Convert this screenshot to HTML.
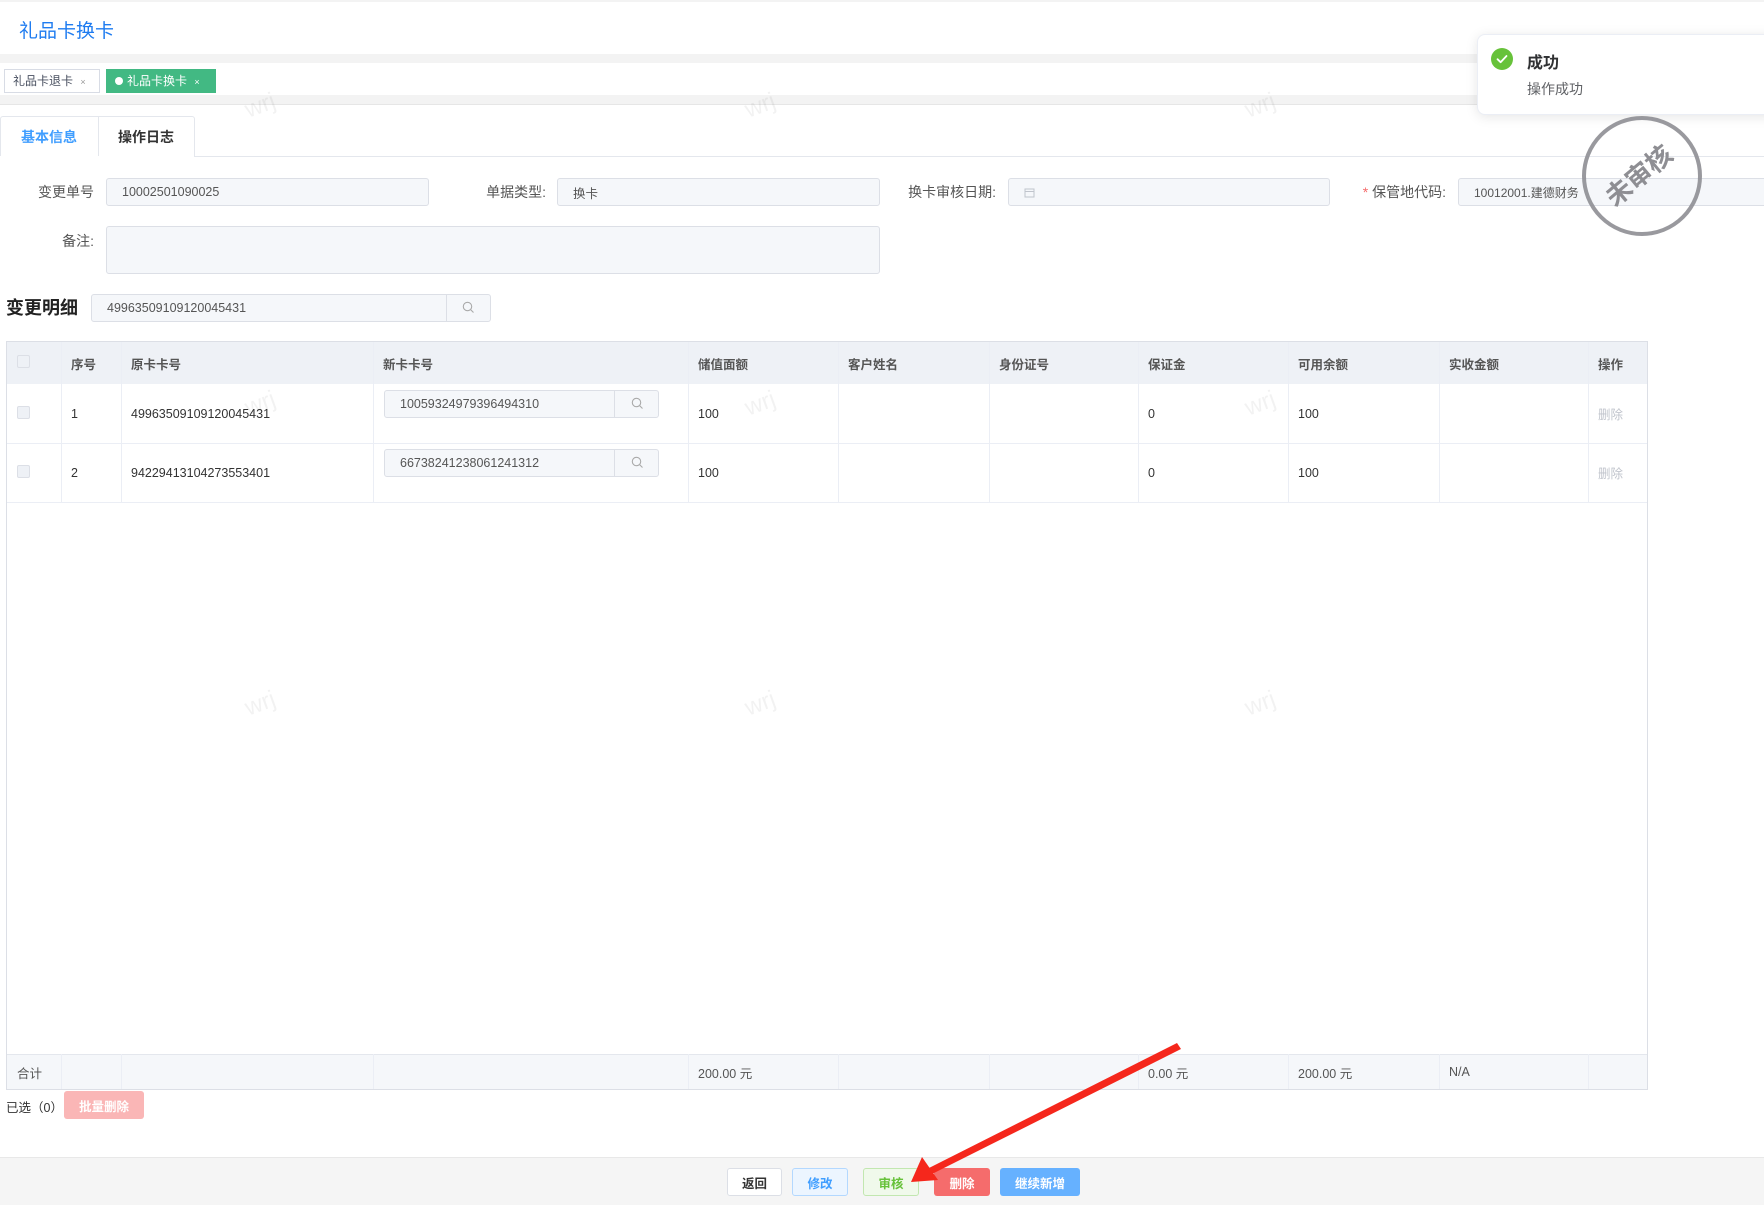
<!DOCTYPE html>
<html><head><meta charset="utf-8"><style>
*{box-sizing:border-box;margin:0;padding:0}
body{width:1764px;height:1205px;position:relative;overflow:hidden;background:#fff;font-family:"Liberation Sans","Noto Sans CJK SC",sans-serif;color:#333;font-size:13px}
.a{position:absolute}
.inp{position:absolute;background:#f5f7fa;border:1px solid #dcdfe6;border-radius:3px;font-size:12.5px;color:#555;padding-left:15px;display:flex;align-items:center}
.lbl{position:absolute;font-size:14px;color:#555;text-align:right}
.th,.td{position:absolute;font-size:12.5px;display:flex;align-items:center;padding-left:10px}
.th{font-weight:bold;color:#555}
.vl{position:absolute;width:1px;background:#ebeef5}
.hl{position:absolute;height:1px;background:#ebeef5}
.btn{position:absolute;top:1168px;height:28px;border-radius:3px;font-size:12.5px;font-weight:bold;display:flex;align-items:center;justify-content:center}
.wm{position:absolute;color:rgba(0,0,0,0.05);font-size:24px;transform:rotate(-20deg)}
.srch{position:absolute}
</style></head><body>
<div class="a" style="left:0;top:0;width:1764px;height:2px;background:#f3f3f3"></div>
<div class="a" style="left:19px;top:16px;font-size:19px;color:#1f7cf0">礼品卡换卡</div>
<div class="a" style="left:0;top:54px;width:1764px;height:9px;background:#f3f3f3"></div>
<div class="a" style="left:0;top:95px;width:1764px;height:10px;background:#f3f3f3;border-bottom:1px solid #e6e6e6"></div>
<div class="a" style="left:4px;top:69px;width:96px;height:24px;border:1px solid #d8dce5;font-size:12px;color:#495060;padding-left:8px;line-height:22px">礼品卡退卡 <span style="font-size:9px;color:#999;margin-left:4px">×</span></div>
<div class="a" style="left:106px;top:69px;width:110px;height:24px;background:#42b983;font-size:12px;color:#fff;padding-left:9px;line-height:24px"><span style="display:inline-block;width:8px;height:8px;border-radius:50%;background:#fff;margin-right:4px"></span>礼品卡换卡 <span style="font-size:9px;margin-left:4px">×</span></div>

<div class="a" style="left:0;top:156px;width:1764px;height:1px;background:#e4e7ed"></div>
<div class="a" style="left:0;top:116px;width:195px;height:41px;border:1px solid #e4e7ed;border-bottom:none;border-radius:3px 3px 0 0;background:#fff"></div>
<div class="a" style="left:98px;top:116px;width:1px;height:40px;background:#e4e7ed"></div>
<div class="a" style="left:0;top:156px;width:98px;height:1px;background:#fff"></div>
<div class="a" style="left:21px;top:127px;font-size:14px;color:#409eff;font-weight:bold">基本信息</div>
<div class="a" style="left:118px;top:127px;font-size:14px;color:#333;font-weight:bold">操作日志</div>

<div class="lbl" style="left:20px;top:182px;width:74px">变更单号</div>
<div class="inp" style="left:106px;top:178px;width:323px;height:28px">10002501090025</div>
<div class="lbl" style="left:470px;top:182px;width:76px">单据类型:</div>
<div class="inp" style="left:557px;top:178px;width:323px;height:28px">换卡</div>
<div class="lbl" style="left:890px;top:182px;width:106px">换卡审核日期:</div>
<div class="inp" style="left:1008px;top:178px;width:322px;height:28px"><svg width="11" height="11" viewBox="0 0 11 11"><rect x="1" y="2" width="9" height="8" fill="none" stroke="#c0c4cc"/><line x1="1" y1="4.5" x2="10" y2="4.5" stroke="#c0c4cc"/></svg></div>
<div class="lbl" style="left:1350px;top:182px;width:96px"><span style="color:#f56c6c">*</span> 保管地代码:</div>
<div class="inp" style="left:1458px;top:178px;width:320px;height:28px;font-size:12px">10012001.建德财务</div>
<div class="lbl" style="left:40px;top:231px;width:54px">备注:</div>
<div class="inp" style="left:106px;top:226px;width:774px;height:48px"></div>

<div class="a" style="left:6px;top:294px;font-size:18px;font-weight:bold;color:#222">变更明细</div>
<div class="inp" style="left:91px;top:294px;width:400px;height:28px;padding-left:15px">49963509109120045431</div>
<div class="a" style="left:446px;top:295px;width:1px;height:26px;background:#dcdfe6"></div>
<svg class="srch" style="left:462px;top:301px" width="13" height="13" viewBox="0 0 13 13"><circle cx="5.5" cy="5.5" r="4.2" fill="none" stroke="#aaa" stroke-width="1.1"/><line x1="8.6" y1="8.6" x2="11.5" y2="11.5" stroke="#aaa" stroke-width="1.1"/></svg>

<div class="a" style="left:6px;top:341px;width:1642px;height:749px;border:1px solid #dcdfe6"></div>
<div class="a" style="left:7px;top:342px;width:1640px;height:42px;background:#eef1f6"></div>
<div class="a" style="left:7px;top:1054px;width:1640px;height:35px;background:#f5f7fa;border-top:1px solid #e4e7ed"></div>
<div class="hl" style="left:7px;top:443px;width:1640px"></div>
<div class="hl" style="left:7px;top:502px;width:1640px"></div>
<div class="vl" style="left:61px;top:342px;height:160px"></div>
<div class="vl" style="left:121px;top:342px;height:160px"></div>
<div class="vl" style="left:373px;top:342px;height:160px"></div>
<div class="vl" style="left:688px;top:342px;height:160px"></div>
<div class="vl" style="left:838px;top:342px;height:160px"></div>
<div class="vl" style="left:989px;top:342px;height:160px"></div>
<div class="vl" style="left:1138px;top:342px;height:160px"></div>
<div class="vl" style="left:1288px;top:342px;height:160px"></div>
<div class="vl" style="left:1439px;top:342px;height:160px"></div>
<div class="vl" style="left:1588px;top:342px;height:160px"></div>
<div class="vl" style="left:61px;top:1054px;height:35px"></div>
<div class="vl" style="left:121px;top:1054px;height:35px"></div>
<div class="vl" style="left:373px;top:1054px;height:35px"></div>
<div class="vl" style="left:688px;top:1054px;height:35px"></div>
<div class="vl" style="left:838px;top:1054px;height:35px"></div>
<div class="vl" style="left:989px;top:1054px;height:35px"></div>
<div class="vl" style="left:1138px;top:1054px;height:35px"></div>
<div class="vl" style="left:1288px;top:1054px;height:35px"></div>
<div class="vl" style="left:1439px;top:1054px;height:35px"></div>
<div class="vl" style="left:1588px;top:1054px;height:35px"></div>

<div class="a" style="left:17px;top:355px;width:13px;height:13px;border:1px solid #dcdfe6;background:#eef1f6;border-radius:2px"></div>
<div class="th" style="left:61px;top:342px;height:42px">序号</div>
<div class="th" style="left:121px;top:342px;height:42px">原卡卡号</div>
<div class="th" style="left:373px;top:342px;height:42px">新卡卡号</div>
<div class="th" style="left:688px;top:342px;height:42px">储值面额</div>
<div class="th" style="left:838px;top:342px;height:42px">客户姓名</div>
<div class="th" style="left:989px;top:342px;height:42px">身份证号</div>
<div class="th" style="left:1138px;top:342px;height:42px">保证金</div>
<div class="th" style="left:1288px;top:342px;height:42px">可用余额</div>
<div class="th" style="left:1439px;top:342px;height:42px">实收金额</div>
<div class="th" style="left:1588px;top:342px;height:42px">操作</div>

<div class="a" style="left:17px;top:406px;width:13px;height:13px;border:1px solid #dcdfe6;background:#eef1f6;border-radius:2px"></div>
<div class="td" style="left:61px;top:384px;height:59px">1</div>
<div class="td" style="left:121px;top:384px;height:59px">49963509109120045431</div>
<div class="inp" style="left:384px;top:390px;width:275px;height:28px">10059324979396494310</div>
<div class="a" style="left:614px;top:391px;width:1px;height:26px;background:#dcdfe6"></div>
<svg class="srch" style="left:631px;top:397px" width="13" height="13" viewBox="0 0 13 13"><circle cx="5.5" cy="5.5" r="4.2" fill="none" stroke="#aaa" stroke-width="1.1"/><line x1="8.6" y1="8.6" x2="11.5" y2="11.5" stroke="#aaa" stroke-width="1.1"/></svg>
<div class="td" style="left:688px;top:384px;height:59px">100</div>
<div class="td" style="left:1138px;top:384px;height:59px">0</div>
<div class="td" style="left:1288px;top:384px;height:59px">100</div>
<div class="td" style="left:1588px;top:384px;height:59px;color:#c0c4cc">删除</div>

<div class="a" style="left:17px;top:465px;width:13px;height:13px;border:1px solid #dcdfe6;background:#eef1f6;border-radius:2px"></div>
<div class="td" style="left:61px;top:443px;height:59px">2</div>
<div class="td" style="left:121px;top:443px;height:59px">94229413104273553401</div>
<div class="inp" style="left:384px;top:449px;width:275px;height:28px">66738241238061241312</div>
<div class="a" style="left:614px;top:450px;width:1px;height:26px;background:#dcdfe6"></div>
<svg class="srch" style="left:631px;top:456px" width="13" height="13" viewBox="0 0 13 13"><circle cx="5.5" cy="5.5" r="4.2" fill="none" stroke="#aaa" stroke-width="1.1"/><line x1="8.6" y1="8.6" x2="11.5" y2="11.5" stroke="#aaa" stroke-width="1.1"/></svg>
<div class="td" style="left:688px;top:443px;height:59px">100</div>
<div class="td" style="left:1138px;top:443px;height:59px">0</div>
<div class="td" style="left:1288px;top:443px;height:59px">100</div>
<div class="td" style="left:1588px;top:443px;height:59px;color:#c0c4cc">删除</div>

<div class="td" style="left:7px;top:1055px;height:34px;color:#555">合计</div>
<div class="td" style="left:688px;top:1055px;height:34px;color:#555">200.00 元</div>
<div class="td" style="left:1138px;top:1055px;height:34px;color:#555">0.00 元</div>
<div class="td" style="left:1288px;top:1055px;height:34px;color:#555">200.00 元</div>
<div class="td" style="left:1439px;top:1055px;height:34px;color:#555">N/A</div>

<div class="a" style="left:6px;top:1097px;font-size:12.5px">已选（0）</div>
<div class="a" style="left:64px;top:1091px;width:80px;height:28px;background:#fab6b6;border-radius:3px;color:#fff;font-size:12.5px;font-weight:bold;display:flex;align-items:center;justify-content:center">批量删除</div>

<div class="a" style="left:0;top:1157px;width:1764px;height:48px;background:#f5f5f5;border-top:1px solid #e8e8e8"></div>
<div class="btn" style="left:727px;width:55px;background:#fff;border:1px solid #dcdfe6;color:#333">返回</div>
<div class="btn" style="left:792px;width:56px;background:#ecf5ff;border:1px solid #b3d8ff;color:#409eff">修改</div>
<div class="btn" style="left:863px;width:56px;background:#f0f9eb;border:1px solid #c2e7b0;color:#67c23a">审核</div>
<div class="btn" style="left:934px;width:56px;background:#f56c6c;color:#fff">删除</div>
<div class="btn" style="left:1000px;width:80px;background:#66b1ff;color:#fff">继续新增</div>

<div class="wm" style="left:245px;top:92px">wrj</div>
<div class="wm" style="left:745px;top:92px">wrj</div>
<div class="wm" style="left:1245px;top:92px">wrj</div>
<div class="wm" style="left:245px;top:390px">wrj</div>
<div class="wm" style="left:745px;top:390px">wrj</div>
<div class="wm" style="left:1245px;top:390px">wrj</div>
<div class="wm" style="left:245px;top:690px">wrj</div>
<div class="wm" style="left:745px;top:690px">wrj</div>
<div class="wm" style="left:1245px;top:690px">wrj</div>

<div class="a" style="left:1477px;top:34px;width:300px;height:81px;background:#fff;border:1px solid #ebeef5;border-radius:8px;box-shadow:0 2px 12px rgba(0,0,0,0.1)"></div>
<svg class="a" style="left:1491px;top:48px" width="22" height="22" viewBox="0 0 22 22"><circle cx="11" cy="11" r="11" fill="#67c23a"/><path d="M6.5 11.2 L9.6 14.2 L15.5 8" fill="none" stroke="#fff" stroke-width="1.8" stroke-linecap="round" stroke-linejoin="round"/></svg>
<div class="a" style="left:1527px;top:49px;font-size:16px;font-weight:bold;color:#303133">成功</div>
<div class="a" style="left:1527px;top:79px;font-size:14px;color:#606266">操作成功</div>

<div class="a" style="left:1582px;top:116px;width:120px;height:120px;border:4px solid #8e8e93;border-radius:50%;opacity:0.9"></div>
<div class="a" style="left:1596px;top:156px;width:84px;text-align:center;font-size:26px;font-weight:bold;color:#8e8e93;transform:rotate(-40deg)">未审核</div>

<svg class="a" style="left:0;top:0" width="1764" height="1205">
<polygon points="1177,1043 1181,1049 928,1176 925,1170" fill="#f5271c"/>
<polygon points="911,1182 922,1157 938,1180" fill="#f5271c"/>
</svg>
</body></html>
